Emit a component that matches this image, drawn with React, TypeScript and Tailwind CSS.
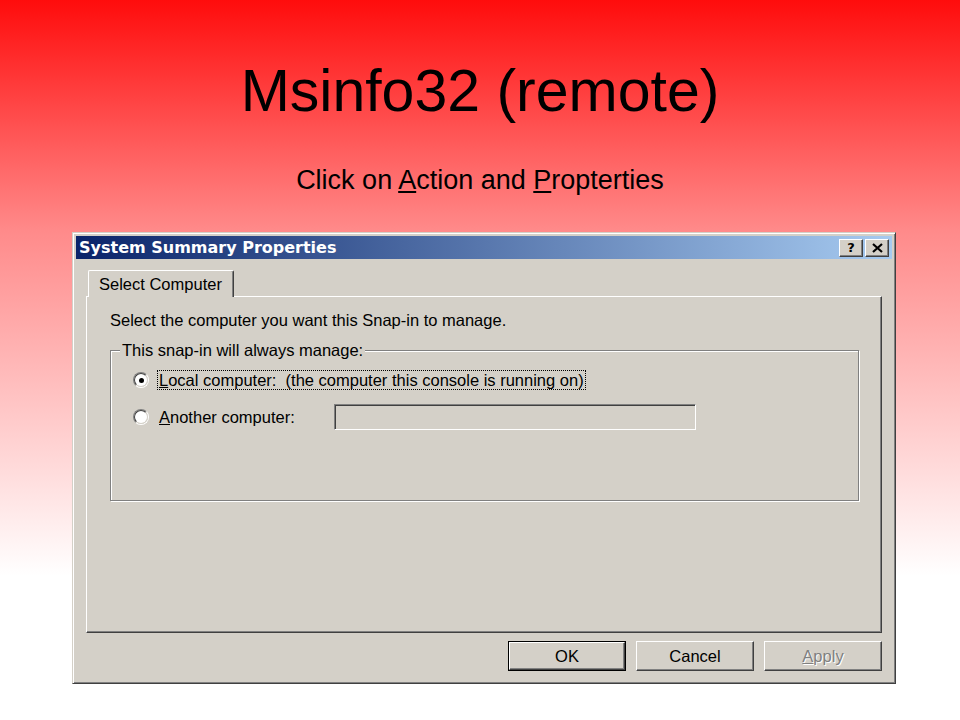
const face = "bg-[#d4d0c8]"
const raised =
  "border border-t-white border-l-white border-r-[#404040] border-b-[#404040] shadow-[inset_-1px_-1px_0_#808080]"
const sunken =
  "border border-t-[#808080] border-l-[#808080] border-r-white border-b-white shadow-[inset_1px_1px_0_#404040,inset_-1px_-1px_0_#d4d0c8]"

function Radio({ checked }: { checked?: boolean }) {
  return (
    <span className="inline-block w-[16px] h-[16px] shrink-0 rounded-full border border-t-[#808080] border-l-[#808080] border-r-white border-b-white">
      <span className="flex w-full h-full items-center justify-center rounded-full border border-t-[#404040] border-l-[#404040] border-r-[#d4d0c8] border-b-[#d4d0c8] bg-white">
        {checked && <span className="w-[5px] h-[5px] rounded-full bg-black" />}
      </span>
    </span>
  )
}

function TitleButton({ children }: { children: React.ReactNode }) {
  return (
    <span className={`${face} ${raised} flex w-[24px] h-[18px] items-center justify-center`}>
      {children}
    </span>
  )
}

function DialogButton({ label, def, disabled }: { label: React.ReactNode; def?: boolean; disabled?: boolean }) {
  const inner = (
    <span
      className={`${face} ${raised} flex h-full w-full items-center justify-center ${
        disabled ? "text-[#808080] [text-shadow:1px_1px_0_#fff]" : "text-black"
      }`}
    >
      {label}
    </span>
  )
  return def ? (
    <span className="block w-[118px] h-[30px] border border-black">{inner}</span>
  ) : (
    <span className="block w-[118px] h-[30px]">{inner}</span>
  )
}

export default function App() {
  return (
    <div
      className="w-[960px] h-[720px] flex flex-col items-center bg-[linear-gradient(to_bottom,#ff0c0c_0%,#ff8a8a_32%,#ffffff_80%)] overflow-hidden"
      style={{ fontFamily: '"Liberation Sans", Arial, sans-serif' }}
    >
      <h1 className="mt-[62px] text-[59px] leading-none text-black">Msinfo32 (remote)</h1>
      <p className="mt-[46px] text-[27px] leading-none text-black">
        Click on <span className="underline">A</span>ction and <span className="underline">P</span>ropterties
      </p>

      <div
        className={`self-start ml-[72px] mt-[38px] w-[824px] h-[452px] ${face} border border-[#d4d0c8] border-r-[#404040] border-b-[#404040] shadow-[inset_1px_1px_0_#fff,inset_-1px_-1px_0_#808080] p-[3px] flex flex-col text-[16.5px] text-black`}
      >
        <div className="h-[23px] flex items-center justify-between pl-[3px] pr-[3px] bg-[linear-gradient(to_right,#0a246a,#a6caf0)]">
          <span
            className="text-white font-bold text-[16px] leading-none"
            style={{ fontFamily: '"DejaVu Sans", Verdana, sans-serif' }}
          >
            System Summary Properties
          </span>
          <div className="flex gap-[2px]">
            <TitleButton>
              <span
                className="font-bold text-[13px] leading-none text-black"
                style={{ fontFamily: '"DejaVu Sans", Verdana, sans-serif' }}
              >
                ?
              </span>
            </TitleButton>
            <TitleButton>
              <svg width="11" height="10" viewBox="0 0 11 10">
                <path d="M1 1 L10 9 M10 1 L1 9" stroke="#000" strokeWidth="2.2" />
              </svg>
            </TitleButton>
          </div>
        </div>

        <div className="flex-1 flex flex-col px-[10px] pt-[11px] pb-[9px]">
          <div className="flex pl-[2px]">
            <div className="relative z-10 -mb-px w-[146px] h-[27px] pl-[10px] flex items-center border border-b-0 border-t-white border-l-white border-r-[#404040] shadow-[inset_-1px_0_0_#808080] rounded-t-[2px] bg-[#d4d0c8]">
              Select Computer
            </div>
          </div>

          <div className={`h-[337px] ${raised} pl-[23px] pr-[22px] pt-[13px]`}>
            <p className="leading-[20px]">Select the computer you want this Snap-in to manage.</p>

            <div className="mt-[20px] border border-[#808080] shadow-[inset_1px_1px_0_#fff,1px_1px_0_#fff] pl-[22px] pb-[70px]">
              <span className={`block w-fit -mt-[11px] -ml-[13px] px-[2px] leading-[20px] ${face}`}>
                This snap-in will always manage:
              </span>

              <div className="mt-[10px] flex items-center h-[20px]">
                <Radio checked />
                <span className="ml-[8px] border border-dotted border-black px-[1px] leading-[18px] whitespace-pre">
                  <span className="underline">L</span>ocal computer:  (the computer this console is running on)
                </span>
              </div>

              <div className="mt-[14px] flex items-center h-[26px]">
                <Radio />
                <span className="ml-[8px] w-[177px] border border-transparent px-[1px] leading-[18px]">
                  <span className="underline">A</span>nother computer:
                </span>
                <div className={`w-[362px] h-[26px] ${face} ${sunken}`} />
              </div>
            </div>
          </div>

          <div className="mt-[8px] flex justify-end gap-[10px]">
            <DialogButton label="OK" def />
            <DialogButton label="Cancel" />
            <DialogButton
              label={
                <span>
                  <span className="underline">A</span>pply
                </span>
              }
              disabled
            />
          </div>
        </div>
      </div>
    </div>
  )
}
